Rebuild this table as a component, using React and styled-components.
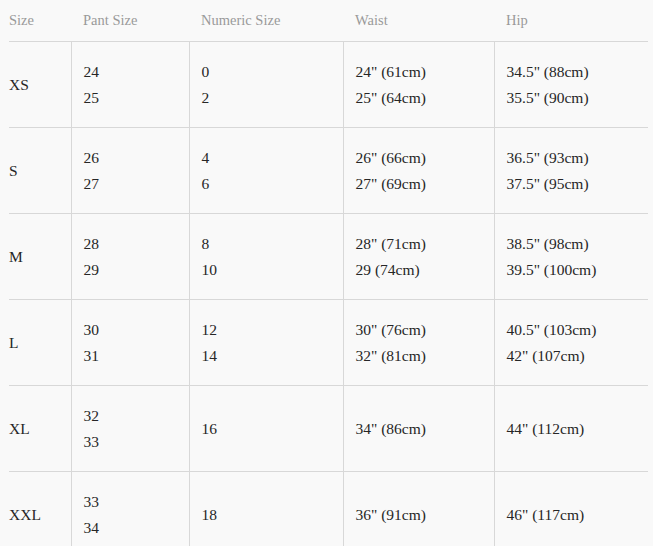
import React from "react";
import styled, { createGlobalStyle } from "styled-components";

const serif = `"Liberation Serif", "Times New Roman", serif`;

const GlobalStyle = createGlobalStyle`
  html, body {
    margin: 0;
    padding: 0;
    background: #f9f9f9;
  }
  body {
    font-family: ${serif};
    color: #333;
  }
`;

const Wrapper = styled.div`
  padding: 0 5px 0 9px;
`;

const Table = styled.table`
  width: 639px;
  border-collapse: collapse;
  table-layout: fixed;
  font-family: ${serif};
`;

const HeadCell = styled.th`
  height: 41px;
  padding: 0 0 0 ${(p) => (p.$first ? 0 : 12)}px;
  text-align: left;
  font-family: ${serif};
  font-weight: normal;
  font-size: 14.5px;
  color: #9a9a9a;
  border-bottom: 1px solid #d8d8d8;
  vertical-align: middle;
`;

const Row = styled.tr`
  border-bottom: 1px solid #d8d8d8;
`;

const Cell = styled.td`
  height: 85px;
  padding: 0 0 0 ${(p) => (p.$first ? 0 : 12)}px;
  font-family: ${serif};
  font-size: 15.5px;
  color: #262626;
  vertical-align: middle;
  border-left: ${(p) => (p.$first ? "none" : "1px solid #d8d8d8")};
`;

const Line = styled.div`
  line-height: 26px;
  white-space: nowrap;
`;

const columns = [
  { label: "Size", width: 62 },
  { label: "Pant Size", width: 118 },
  { label: "Numeric Size", width: 154 },
  { label: "Waist", width: 151 },
  { label: "Hip", width: 154 },
];

const rows = [
  ["XS", ["24", "25"], ["0", "2"], ['24" (61cm)', '25" (64cm)'], ['34.5" (88cm)', '35.5" (90cm)']],
  ["S", ["26", "27"], ["4", "6"], ['26" (66cm)', '27" (69cm)'], ['36.5" (93cm)', '37.5" (95cm)']],
  ["M", ["28", "29"], ["8", "10"], ['28" (71cm)', "29 (74cm)"], ['38.5" (98cm)', '39.5" (100cm)']],
  ["L", ["30", "31"], ["12", "14"], ['30" (76cm)', '32" (81cm)'], ['40.5" (103cm)', '42" (107cm)']],
  ["XL", ["32", "33"], ["16"], ['34" (86cm)'], ['44" (112cm)']],
  ["XXL", ["33", "34"], ["18"], ['36" (91cm)'], ['46" (117cm)']],
];

export default function App() {
  return (
    <>
      <GlobalStyle />
      <Wrapper>
        <Table>
          <colgroup>
            {columns.map((c) => (
              <col key={c.label} style={{ width: c.width }} />
            ))}
          </colgroup>
          <thead>
            <tr>
              {columns.map((c, i) => (
                <HeadCell key={c.label} $first={i === 0}>
                  {c.label}
                </HeadCell>
              ))}
            </tr>
          </thead>
          <tbody>
            {rows.map((r) => (
              <Row key={r[0]}>
                <Cell $first>{r[0]}</Cell>
                {r.slice(1).map((vals, j) => (
                  <Cell key={j}>
                    {vals.map((v) => (
                      <Line key={v}>{v}</Line>
                    ))}
                  </Cell>
                ))}
              </Row>
            ))}
          </tbody>
        </Table>
      </Wrapper>
    </>
  );
}
